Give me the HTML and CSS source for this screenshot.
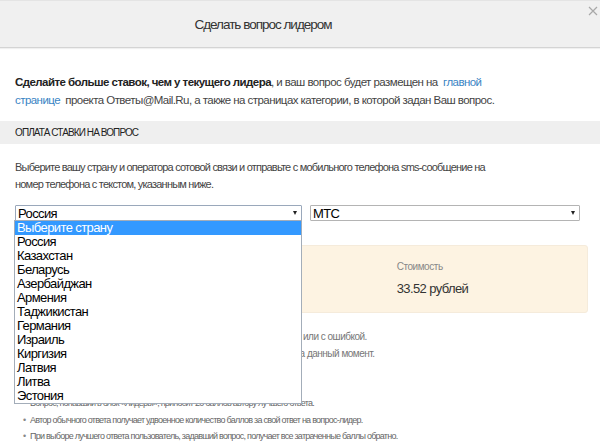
FILE: index.html
```html
<!DOCTYPE html>
<html lang="ru">
<head>
    <meta charset="UTF-8">
    <meta name="viewport" content="width=device-width, initial-scale=1.0">
    <title>Сделать вопрос лидером</title>

    <link rel="stylesheet" href="styles.css">
</head>
<body>
    <div class="modal">
        <div class="modal-header">
            <div class="title">Сделать вопрос лидером</div>
            <svg class="close" width="10" height="10" viewBox="0 0 10 10">
                <path d="M1 1L9 9M9 1L1 9" stroke="#a8a8a8" stroke-width="1.2" fill="none"/>
            </svg>
        </div>

        <p class="intro">
            <b>Сделайте больше ставок, чем у текущего лидера</b>, и ваш вопрос будет размещен на &nbsp;<a href="#">главной странице</a>&nbsp; проекта Ответы@Mail.Ru, а также на страницах категории, в которой задан Ваш вопрос.
        </p>

        <div class="section-title">Оплата ставки на вопрос</div>

        <div class="body">
            <p class="hint">Выберите вашу страну и оператора сотовой связи и отправьте с мобильного телефона sms-сообщение на номер телефона с текстом, указанным ниже.</p>

            <div class="selects">
                <div class="select country">
                    <span>Россия</span>
                    <span class="arrow"></span>

                    <!-- open list of the country select -->
                    <ul class="options">
                        <li class="active">Выберите страну</li>
                        <li>Россия</li>
                        <li>Казахстан</li>
                        <li>Беларусь</li>
                        <li>Азербайджан</li>
                        <li>Армения</li>
                        <li>Таджикистан</li>
                        <li>Германия</li>
                        <li>Израиль</li>
                        <li>Киргизия</li>
                        <li>Латвия</li>
                        <li>Литва</li>
                        <li>Эстония</li>
                    </ul>
                </div>
                <div class="select operator">
                    <span>МТС</span>
                    <span class="arrow"></span>
                </div>
            </div>

            <div class="price">
                <div class="cell">
                    <div class="label">Номер</div>
                    <div class="value">4161</div>
                </div>
                <div class="cell">
                    <div class="label">Текст SMS</div>
                    <div class="value">lider 123</div>
                </div>
                <div class="cell">
                    <div class="label">Стоимость</div>
                    <div class="value">33.52 рублей</div>
                </div>
            </div>

            <p class="note">Деньги не возвращаются, если sms отправлено на неверный номер или с ошибкой.</p>
            <p class="note">Стоимость sms указана с учетом всех налогов и актуальна только на данный момент.</p>

            <div class="rules-title">Правила</div>
            <ul class="rules">
                <li>Вопрос, попавший в блок «Лидеры», приносит 20 баллов автору лучшего ответа.</li>
                <li>Автор обычного ответа получает удвоенное количество баллов за свой ответ на вопрос-лидер.</li>
                <li>При выборе лучшего ответа пользователь, задавший вопрос, получает все затраченные баллы обратно.</li>
            </ul>
        </div>
    </div>
</body>
</html>
```

FILE: styles.css
```css
*{
    margin: 0;
    padding: 0;
    box-sizing: border-box
}

body{
    font-family: "Liberation Sans", Arial, sans-serif;
    color: #444;
    background-color: #fff;
}

.modal{
    width: 600px;
    height: 445px;
    overflow: hidden;
}

.modal-header{
    position: relative;
    height: 48px;
    padding-right: 74px;
    background-color: #f0f0f0;
    border-top: 1px solid #e4e4e4;
    border-bottom: 1px solid #d4d4d4;
    box-shadow: 0 1px 1px rgba(0, 0, 0, 0.06);
    display: flex;
    align-items: center;
    justify-content: center;
}

.title{
    font-size: 13.5px;
    letter-spacing: -1px;
    color: #333;
}

.close{
    position: absolute;
    top: 5px;
    right: 2px;
}

.intro{
    padding: 25px 88px 0 15px;
    font-size: 11.5px;
    letter-spacing: -0.55px;
    line-height: 18px;
    color: #444;
}

.intro b{
    color: #222;
}

.intro a{
    color: #3a84c4;
    text-decoration: none;
}

.section-title{
    margin-top: 12px;
    height: 23px;
    line-height: 23px;
    padding-left: 15px;
    background-color: #efefef;
    font-size: 10px;
    letter-spacing: -0.9px;
    text-transform: uppercase;
    color: #222;
}

.body{
    padding: 0 12px 0 15px;
}

.hint{
    padding: 15px 80px 0 0;
    font-size: 11px;
    letter-spacing: -0.79px;
    line-height: 17px;
    color: #444;
}

.selects{
    display: flex;
    gap: 8px;
    margin-top: 12px;
}

.select{
    position: relative;
    height: 16px;
    border: 1px solid #b4b4b4;
    border-radius: 1px;
    background-color: #fff;
    display: flex;
    align-items: center;
    justify-content: space-between;
    padding: 0 4px 0 2px;
    font-size: 13px;
    letter-spacing: -0.6px;
    color: #000;
}

.select.country{
    width: 287px;
    border-color: #9aa8bb;
}

.select.operator{
    width: 270px;
}

.arrow{
    width: 0;
    height: 0;
    border-left: 2.5px solid transparent;
    border-right: 2.5px solid transparent;
    border-top: 4px solid #222;
}

.options{
    position: absolute;
    top: 14px;
    left: -2px;
    width: 288px;
    list-style: none;
    background-color: #fff;
    border: 1px solid #a3adb9;
    z-index: 2;
}

.options li{
    height: 14px;
    line-height: 14px;
    padding-left: 2px;
    font-size: 13px;
    letter-spacing: -0.6px;
    color: #000;
}

.options li.active{
    background-color: #3399ff;
    color: #fff;
}

.price{
    margin-top: 24px;
    height: 68px;
    display: grid;
    grid-template-columns: 1fr 1fr 1fr;
    background-color: #fdf3e2;
    border: 1px solid #f5ebdb;
    border-radius: 3px;
}

.cell{
    padding-top: 15px;
}

.label{
    font-size: 10px;
    letter-spacing: -0.45px;
    color: #888;
}

.value{
    margin-top: 9px;
    font-size: 13px;
    letter-spacing: -0.6px;
    color: #333;
}

.note{
    margin-top: 15px;
    line-height: 17px;
    font-size: 10px;
    letter-spacing: -0.5px;
    color: #777;
}

.note + .note{
    margin-top: 0;
}

.rules-title{
    margin-top: 12px;
    font-size: 12px;
    letter-spacing: -0.6px;
    color: #333;
}

.rules{
    margin-top: 10px;
    list-style: none;
}

.rules li{
    position: relative;
    padding-left: 15px;
    height: 16.5px;
    font-size: 9px;
    letter-spacing: -0.75px;
    color: #666;
}

.rules li::before{
    content: "\2022";
    position: absolute;
    left: 8px;
    color: #888;
}
```
